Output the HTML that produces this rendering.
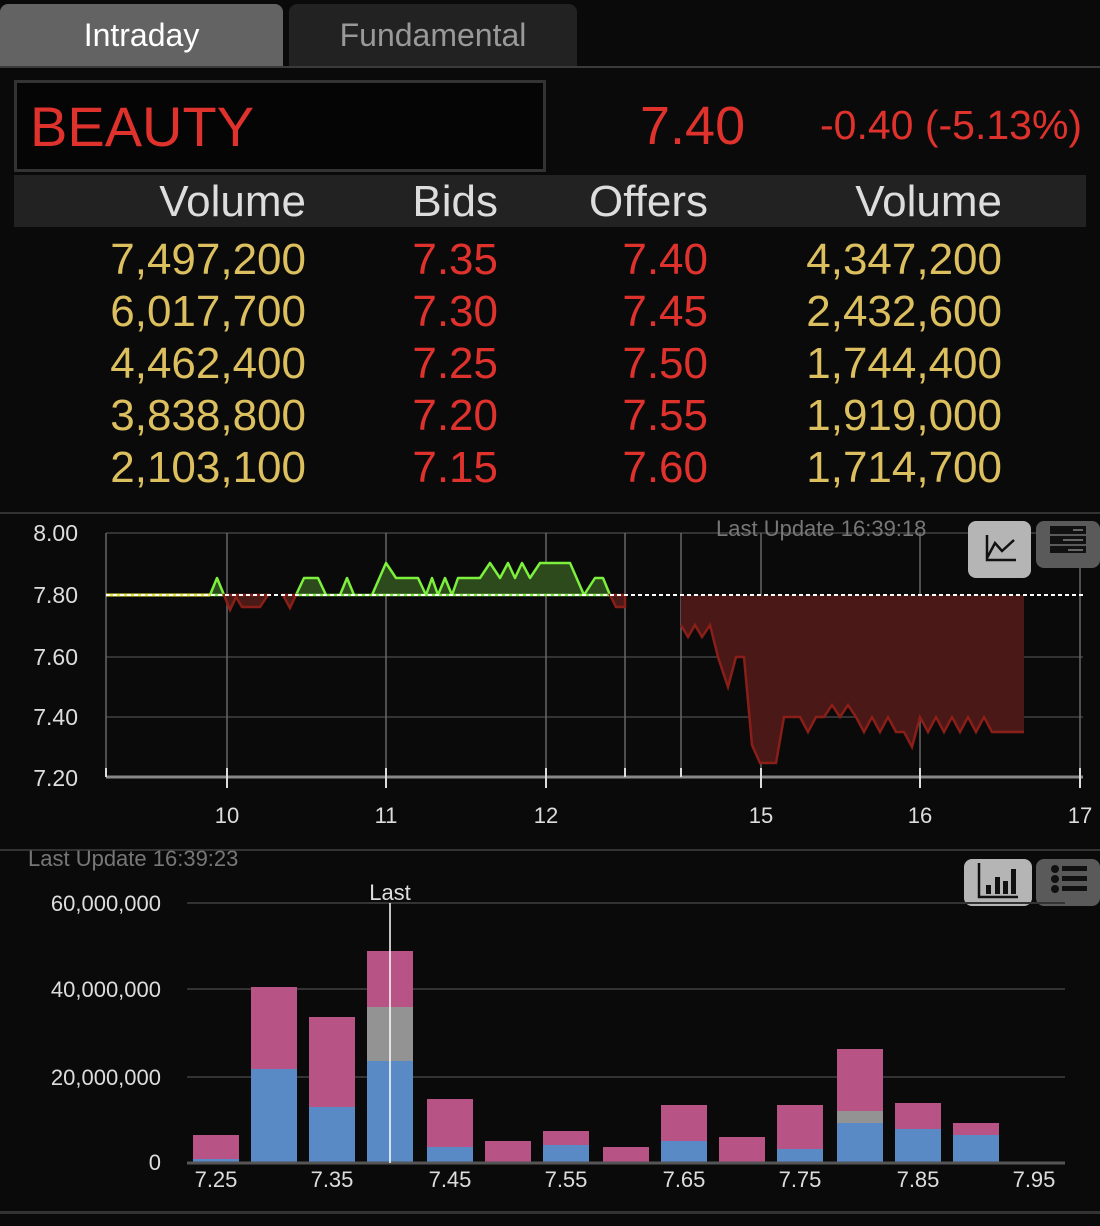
<!DOCTYPE html>
<html><head><meta charset="utf-8"><style>
body{margin:0;width:1100px;height:1226px;background:#0a0a0a;font-family:"Liberation Sans","DejaVu Sans",sans-serif;overflow:hidden;position:relative;color:#ddd}
.a{position:absolute;white-space:nowrap}
.tab{position:absolute;top:4px;height:62px;border-radius:8px 8px 0 0;font-size:32px;line-height:62px;text-align:center}
.r{position:absolute;text-align:right;font-size:44px;line-height:52px}
.g{color:#dcbf5e}.rd{color:#e0322d}
</style></head><body>
<div class="tab" style="left:0;width:283px;background:#636363;color:#fff">Intraday</div>
<div class="tab" style="left:289px;width:288px;background:#222;color:#999">Fundamental</div>
<div class="a" style="left:0;top:66px;width:1100px;height:2px;background:#3a3a3a"></div>
<div class="a" style="left:14px;top:80px;width:526px;height:86px;border:3px solid #333;background:#050505"></div>
<div class="a rd" style="left:30px;top:94px;font-size:56px;line-height:66px">BEAUTY</div>
<div class="a rd" style="left:640px;top:93px;font-size:54px;line-height:66px">7.40</div>
<div class="a rd" style="left:820px;top:100px;font-size:41px;line-height:50px">-0.40 (-5.13%)</div>
<div class="a" style="left:14px;top:175px;width:1072px;height:52px;background:#222"></div>
<div class="r" style="left:0;width:306px;top:176px;color:#ddd">Volume</div>
<div class="r" style="left:300px;width:198px;top:176px;color:#ddd">Bids</div>
<div class="r" style="left:500px;width:208px;top:176px;color:#ddd">Offers</div>
<div class="r" style="left:700px;width:302px;top:176px;color:#ddd">Volume</div>

<div class="r g" style="left:0;width:306px;top:234px">7,497,200<br>6,017,700<br>4,462,400<br>3,838,800<br>2,103,100</div>
<div class="r rd" style="left:300px;width:198px;top:234px">7.35<br>7.30<br>7.25<br>7.20<br>7.15</div>
<div class="r rd" style="left:500px;width:208px;top:234px">7.40<br>7.45<br>7.50<br>7.55<br>7.60</div>
<div class="r g" style="left:700px;width:302px;top:234px">4,347,200<br>2,432,600<br>1,744,400<br>1,919,000<br>1,714,700</div>

<svg class="a" style="left:0;top:0" width="1100" height="1226" font-family="Liberation Sans, sans-serif">
<rect x="0" y="512" width="1100" height="2" fill="#333"/>
<rect x="0" y="849" width="1100" height="2" fill="#333"/>
<rect x="0" y="1211" width="1100" height="3" fill="#333"/>
<g stroke="#333" stroke-width="2">
<line x1="106" y1="533" x2="1083" y2="533"/><line x1="106" y1="657" x2="1083" y2="657"/><line x1="106" y1="717" x2="1083" y2="717"/>
</g>
<g stroke="#666" stroke-width="1.5">
<line x1="106" y1="533" x2="106" y2="777"/><line x1="227" y1="533" x2="227" y2="777"/><line x1="386" y1="533" x2="386" y2="777"/><line x1="546" y1="533" x2="546" y2="777"/><line x1="625" y1="533" x2="625" y2="777"/><line x1="681" y1="533" x2="681" y2="777"/><line x1="761" y1="533" x2="761" y2="777"/><line x1="920" y1="533" x2="920" y2="777"/><line x1="1080" y1="533" x2="1080" y2="777"/>
</g>
<line x1="106" y1="777" x2="1083" y2="777" stroke="#888" stroke-width="3"/>
<g stroke="#ddd" stroke-width="2">
<line x1="106" y1="768" x2="106" y2="777"/><line x1="227" y1="768" x2="227" y2="788"/><line x1="386" y1="768" x2="386" y2="788"/><line x1="546" y1="768" x2="546" y2="788"/><line x1="625" y1="768" x2="625" y2="777"/><line x1="681" y1="768" x2="681" y2="777"/><line x1="761" y1="768" x2="761" y2="788"/><line x1="920" y1="768" x2="920" y2="788"/><line x1="1080" y1="768" x2="1080" y2="788"/>
</g>
<g fill="#ddd" font-size="23" text-anchor="end"><text x="78" y="541">8.00</text><text x="78" y="603">7.80</text><text x="78" y="665">7.60</text><text x="78" y="725">7.40</text><text x="78" y="786">7.20</text></g>
<g fill="#ddd" font-size="22" text-anchor="middle"><text x="227" y="823">10</text><text x="386" y="823">11</text><text x="546" y="823">12</text><text x="761" y="823">15</text><text x="920" y="823">16</text><text x="1080" y="823">17</text></g>
<text x="716" y="536" fill="#777" font-size="22">Last Update 16:39:18</text>
<path d="M210,595 L217,578 L224,595 Z M296,595 L304,578 L318,578 L326,595 L340,595 L347,578 L354,595 L372,595 L386,563 L396,578 L418,578 L426,595 L432,578 L438,595 L445,578 L452,595 L458,578 L480,578 L490,563 L500,578 L508,563 L515,578 L522,563 L530,578 L540,563 L570,563 L584,595 L595,578 L603,578 L610,595 Z" fill="#2c4a1c" stroke="#7cf03c" stroke-width="2.5" stroke-linejoin="round"/>
<path d="M224,595 L230,610 L236,597 L242,607 L260,607 L268,595 Z M283,595 L290,608 L296,595 Z M610,595 L616,607 L625,607 L625,595 Z" fill="#4a1a16" stroke="#8a1e18" stroke-width="2.5"/>
<path d="M681,595 L681,625 L688,637 L695,625 L702,637 L710,625 L718,657 L728,687 L736,657 L744,657 L752,745 L760,763 L776,763 L784,717 L800,717 L808,732 L816,717 L824,717 L832,705 L840,717 L848,705 L856,717 L864,732 L872,717 L880,732 L888,717 L896,732 L904,732 L912,747 L920,717 L928,732 L936,717 L944,732 L952,717 L960,732 L968,717 L976,732 L984,717 L992,732 L1024,732 L1024,595 Z" fill="#4a1816"/>
<path d="M681,625 L688,637 L695,625 L702,637 L710,625 L718,657 L728,687 L736,657 L744,657 L752,745 L760,763 L776,763 L784,717 L800,717 L808,732 L816,717 L824,717 L832,705 L840,717 L848,705 L856,717 L864,732 L872,717 L880,732 L888,717 L896,732 L904,732 L912,747 L920,717 L928,732 L936,717 L944,732 L952,717 L960,732 L968,717 L976,732 L984,717 L992,732 L1024,732" fill="none" stroke="#8a1e18" stroke-width="2.5"/>
<line x1="106" y1="595" x2="210" y2="595" stroke="#e8e840" stroke-width="3"/>
<line x1="106" y1="595" x2="1083" y2="595" stroke="#fff" stroke-width="2" stroke-dasharray="4,3"/>
<rect x="968" y="521" width="63" height="57" rx="8" fill="#b5b5b5"/>
<path d="M987,535 V560 H1016 M987,558 L995,543 L1002,551 L1014,540" fill="none" stroke="#111" stroke-width="2.5"/>
<rect x="1036" y="521" width="64" height="47" rx="8" fill="#5a5a5a"/>
<rect x="1050" y="526" width="36" height="8" fill="#111"/><rect x="1050" y="536" width="36" height="8" fill="#111"/><rect x="1050" y="546" width="36" height="7" fill="#111"/>
<rect x="1073" y="529" width="10" height="2" fill="#666"/><rect x="1063" y="539" width="20" height="2" fill="#666"/><rect x="1068" y="549" width="15" height="2" fill="#666"/>
<rect x="964" y="859" width="68" height="47" rx="8" fill="#b5b5b5"/>
<path d="M979,863 V897 H1018" fill="none" stroke="#111" stroke-width="2.5"/>
<rect x="986" y="885" width="5" height="9" fill="#111"/><rect x="995" y="877" width="5" height="17" fill="#111"/><rect x="1003" y="881" width="5" height="13" fill="#111"/><rect x="1011" y="869" width="5" height="25" fill="#111"/>
<rect x="1036" y="859" width="64" height="47" rx="8" fill="#5a5a5a"/>
<g fill="#111"><circle cx="1055" cy="869" r="4"/><circle cx="1055" cy="879" r="4"/><circle cx="1055" cy="889" r="4"/><rect x="1062" y="866" width="25" height="5"/><rect x="1062" y="876" width="25" height="5"/><rect x="1062" y="886" width="25" height="5"/></g>
<text x="28" y="866" fill="#777" font-size="22">Last Update 16:39:23</text>
<g stroke="#333" stroke-width="2"><line x1="187" y1="903" x2="1065" y2="903"/><line x1="187" y1="989" x2="1065" y2="989"/><line x1="187" y1="1077" x2="1065" y2="1077"/></g>
<g fill="#ddd" font-size="22" text-anchor="end"><text x="161" y="911">60,000,000</text><text x="161" y="997">40,000,000</text><text x="161" y="1085">20,000,000</text><text x="161" y="1170">0</text></g>
<g fill="#b85386">
<rect x="193" y="1135" width="46" height="28"/><rect x="251" y="987" width="46" height="176"/><rect x="309" y="1017" width="46" height="146"/><rect x="367" y="951" width="46" height="212"/><rect x="427" y="1099" width="46" height="64"/><rect x="485" y="1141" width="46" height="22"/><rect x="543" y="1131" width="46" height="32"/><rect x="603" y="1147" width="46" height="16"/><rect x="661" y="1105" width="46" height="58"/><rect x="719" y="1137" width="46" height="26"/><rect x="777" y="1105" width="46" height="58"/><rect x="837" y="1049" width="46" height="114"/><rect x="895" y="1103" width="46" height="60"/><rect x="953" y="1123" width="46" height="40"/>
</g>
<g fill="#939393"><rect x="367" y="1007" width="46" height="54"/><rect x="837" y="1111" width="46" height="12"/></g>
<g fill="#5a8ac6">
<rect x="193" y="1159" width="46" height="4"/><rect x="251" y="1069" width="46" height="94"/><rect x="309" y="1107" width="46" height="56"/><rect x="367" y="1061" width="46" height="102"/><rect x="427" y="1147" width="46" height="16"/><rect x="543" y="1145" width="46" height="18"/><rect x="661" y="1141" width="46" height="22"/><rect x="777" y="1149" width="46" height="14"/><rect x="837" y="1123" width="46" height="40"/><rect x="895" y="1129" width="46" height="34"/><rect x="953" y="1135" width="46" height="28"/>
</g>
<line x1="187" y1="1163" x2="1065" y2="1163" stroke="#555" stroke-width="3"/>
<line x1="390" y1="903" x2="390" y2="1163" stroke="#fff" stroke-width="1.5"/>
<text x="390" y="900" fill="#ddd" font-size="22" text-anchor="middle">Last</text>
<g fill="#ddd" font-size="22" text-anchor="middle"><text x="216" y="1187">7.25</text><text x="332" y="1187">7.35</text><text x="450" y="1187">7.45</text><text x="566" y="1187">7.55</text><text x="684" y="1187">7.65</text><text x="800" y="1187">7.75</text><text x="918" y="1187">7.85</text><text x="1034" y="1187">7.95</text></g>
</svg>
</body></html>
